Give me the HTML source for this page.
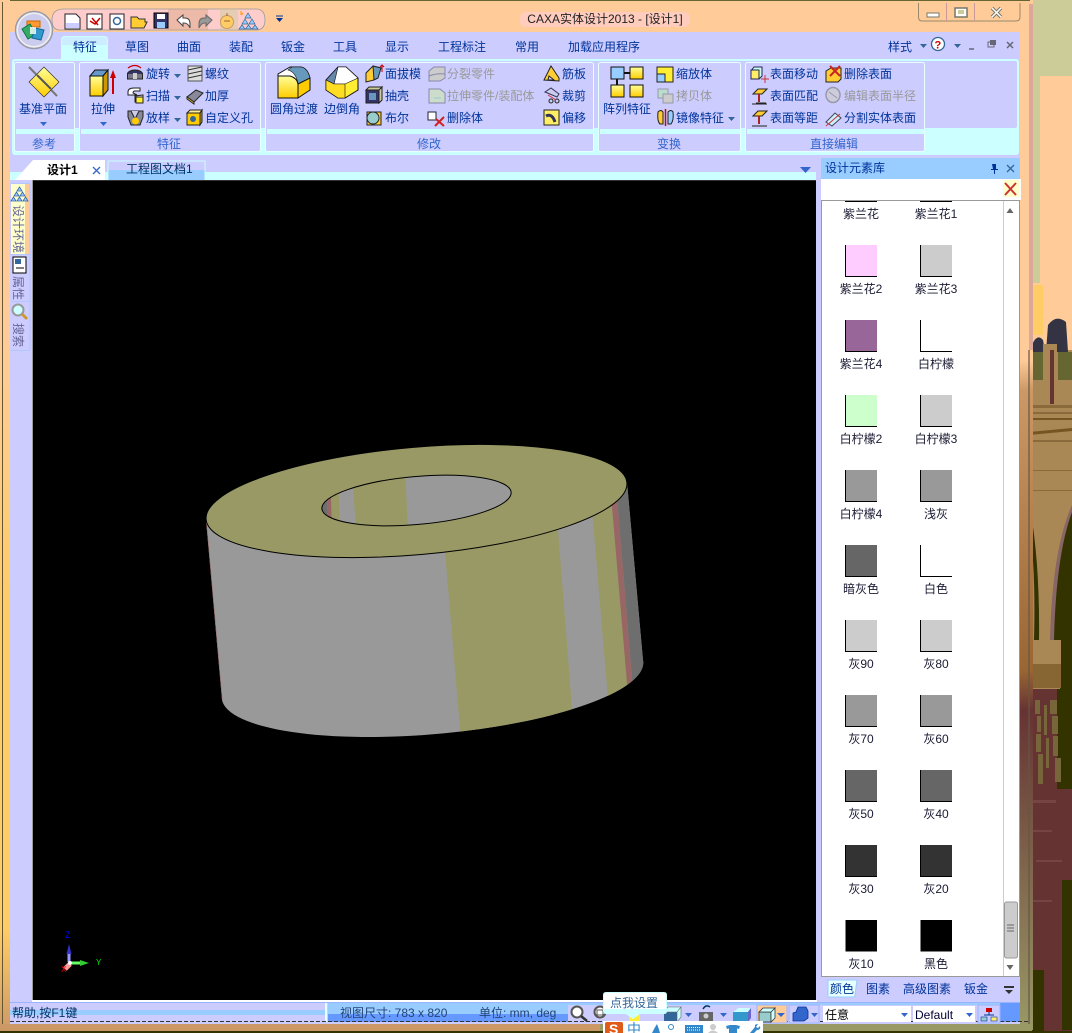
<!DOCTYPE html>
<html lang="zh"><head><meta charset="utf-8"><title>CAXA实体设计2013</title>
<style>
html,body{margin:0;padding:0;background:#000;width:1072px;height:1033px;overflow:hidden}
svg{display:block;position:absolute;left:0;top:0}
text{font-family:"Liberation Sans","Noto Sans CJK SC",sans-serif;font-size:12px;fill:#003399}
.c{text-anchor:middle}
.g{fill:#3366CC}
.d{fill:#999999}
.k{fill:#000}
.l{fill:#1a1a33;text-anchor:middle}
.s{fill:#224477}
</style></head><body>
<svg width="1072" height="1033" viewBox="0 0 1072 1033">
<defs>
<linearGradient id="y" x1="0" y1="0" x2="0" y2="1"><stop offset="0" stop-color="#FFFF99"/><stop offset="1" stop-color="#FFCC00"/></linearGradient>
<linearGradient id="lb" x1="0" y1="0" x2="0" y2="1"><stop offset="0" stop-color="#FFCC99"/><stop offset=".33" stop-color="#FFCC99"/><stop offset=".6" stop-color="#FFCC66"/><stop offset=".9" stop-color="#FFCC66"/><stop offset="1" stop-color="#CC9966"/></linearGradient>
<linearGradient id="rb" x1="0" y1="0" x2="0" y2="1"><stop offset="0" stop-color="#FFCC99"/><stop offset=".33" stop-color="#FFCC99"/><stop offset=".36" stop-color="#CC9966"/><stop offset=".64" stop-color="#996633"/><stop offset=".68" stop-color="#663333"/><stop offset="1" stop-color="#999966"/></linearGradient>
<clipPath id="side"><path d="M206 520L222 700A211 54 -5 0 0 643 660L627 482Z"/><ellipse cx="432.5" cy="679" rx="211.2" ry="53.7" transform="rotate(-5 432.5 679)"/></clipPath>
<clipPath id="hole"><ellipse cx="416.5" cy="500.5" rx="95" ry="24" transform="rotate(-5 416.5 500.5)"/></clipPath>
</defs>

<!-- desktop -->
<rect width="1072" height="1033" fill="#FFCC99"/>
<path d="M1033 0H1072V76H1040V283H1033Z" fill="#CCCC99"/>
<rect x="1033" y="285" width="10" height="50" fill="#FFCC66"/>
<rect x="1028" y="350" width="44" height="340" fill="#AA8855"/>
<path d="M1029 405h43v3h-43zM1029 412h43v2h-43zM1029 440h43v2h-43zM1029 470h43v1h-43zM1029 490h43v1h-43z" fill="#8A6A3A"/>
<path d="M1048 325Q1056 314 1066 322L1068 352H1046ZM1032 345Q1037 333 1043 340L1046 356H1030Z" fill="#333344"/>
<rect x="1029" y="352" width="15" height="28" fill="#666633"/>
<rect x="1058" y="352" width="14" height="28" fill="#666633"/>
<rect x="1043" y="344" width="14" height="60" fill="#AA8855"/>
<rect x="1050" y="350" width="4" height="54" fill="#663333"/>
<path d="M1029 418H1072V420H1029ZM1029 432L1072 428V431L1029 435Z" fill="#775522"/>
<path d="M1029 502Q1040 560 1039 640H1034Q1036 570 1029 520Z" fill="#333300"/>
<path d="M1072 510Q1054 550 1052 640H1060V690H1072Z" fill="#333300"/>
<path d="M1072 512Q1056 555 1054 640H1050Q1052 550 1072 505Z" fill="#886666"/>
<rect x="1029" y="640" width="32" height="24" fill="#AA8855"/>
<rect x="1029" y="664" width="32" height="24" fill="#886633"/>
<rect x="1029" y="689" width="43" height="344" fill="#663333"/>
<rect x="1057" y="689" width="15" height="100" fill="#333300"/>
<path d="M1035 700h5v14h-5zM1037 716h4v16h-4zM1036 734h5v18h-5zM1038 754h5v30h-5zM1044 705h3v30h-3zM1046 738h3v30h-3zM1050 700h7v14h-7zM1052 716h6v18h-6zM1053 736h5v20h-5zM1055 758h6v24h-6z" fill="#77663A"/>
<path d="M1062 880h10v150h-10zM1030 970h14v63h-14z" fill="#333300"/>
<path d="M1030 800h26v3h-26zM1032 830h20v2h-20zM1036 860h26v2h-26zM1030 900h22v2h-22z" fill="#774444"/>

<!-- window frame -->
<rect x="0" y="0" width="1028" height="33" fill="#FFCC99"/>
<rect x="0" y="0" width="1030" height="1" fill="#666633"/>
<rect x="0" y="0" width="10" height="1033" fill="url(#lb)"/>
<rect x="2" y="2" width="1" height="1024" fill="#665533"/>
<rect x="1020" y="30" width="13" height="1000" fill="url(#rb)"/>
<rect x="1029" y="4" width="4" height="346" fill="#CC9999" opacity=".7"/>
<rect x="1028" y="350" width="2" height="680" fill="#665544" opacity=".6"/>
<rect x="0" y="1024" width="1032" height="7" fill="#CC9966"/>
<rect x="600" y="1024" width="432" height="7" fill="#999966"/>
<rect x="0" y="1031" width="1072" height="2" fill="#333300"/>

<!-- main client -->
<rect x="10" y="32" width="1010" height="992" fill="#CCCCFF"/>
<!-- active tab -->
<path d="M61 60V40Q61 36 65 36H104Q108 36 108 40V60Z" fill="#CCFFFF"/>
<path d="M62 60V41Q62 37 66 37H103Q107 37 107 41V45H62Z" fill="#CCCCFF" opacity=".35"/>
<!-- ribbon -->
<rect x="12" y="59" width="1007" height="96" rx="3" fill="#CCFFFF"/>
<rect x="14" y="61" width="1003" height="67" rx="2" fill="#CCCCFF"/>
<g fill="#CCCCFF" stroke="#E6FFFF">
<rect x="14.500" y="62.500" width="60" height="89" rx="2"/>
<rect x="79.500" y="62.500" width="181" height="89" rx="2"/>
<rect x="265.500" y="62.500" width="328" height="89" rx="2"/>
<rect x="598.500" y="62.500" width="142" height="89" rx="2"/>
<rect x="745.500" y="62.500" width="179" height="89" rx="2"/>
</g>
<g fill="#CCFFFF"><rect x="16" y="129" width="58" height="5"/><rect x="81" y="129" width="179" height="5"/><rect x="267" y="129" width="326" height="5"/><rect x="600" y="129" width="140" height="5"/><rect x="747" y="129" width="177" height="5"/></g>

<!-- tab strip -->
<rect x="10" y="172" width="806" height="8" fill="#CCFFFF"/>
<path d="M15 180L33 160H105V180Z" fill="#fff"/>
<path d="M108 180V162Q108 160 110 160H203Q205 160 205 162V180Z" fill="#CCCCFF"/>
<path d="M108 170H205V180H108Z" fill="#99CCFF"/>
<path d="M108 180V161H205V180" fill="none" stroke="#CCFFFF"/>
<rect x="32" y="180" width="1" height="820" fill="#999"/>
<rect x="33" y="180" width="783" height="1" fill="#333"/>
<path d="M800 167H811L805.500 173Z" fill="#3366CC"/>

<!-- viewport -->
<rect x="33" y="181" width="783" height="819" fill="#000"/>
<rect x="32" y="1000" width="785" height="2" fill="#fff"/>

<!-- 3D part -->
<g clip-path="url(#side)">
<rect x="190" y="470" width="470" height="280" fill="#999999"/>
<path d="M444 540L461 740H574.500L558 530Z" fill="#999966"/>
<path d="M592 510L609 710L628 690L611 495Z" fill="#999966"/>
<path d="M611 495L628 695L633 690L616.500 490Z" fill="#996666"/>
<path d="M616.500 490L633 690L650 660L630 470Z" fill="#6E6E6E"/>
<path d="M206 520L222 700" stroke="#996666" stroke-width="1"/>
</g>
<ellipse cx="416.500" cy="501" rx="211.200" ry="53.700" transform="rotate(-5 416.500 501)" fill="#999966" stroke="#000" stroke-width="1"/>
<g clip-path="url(#hole)">
<rect x="315" y="470" width="200" height="60" fill="#999999"/>
<path d="M352 470H405L408 530H356Z" fill="#999966"/>
<path d="M330 470H338L340 530H332Z" fill="#999966"/>
<path d="M326 470H330L332 530H328Z" fill="#996666"/>
<path d="M315 470H326L328 530H315Z" fill="#6E6E6E"/>
</g>
<ellipse cx="416.500" cy="500.500" rx="95" ry="24" transform="rotate(-5 416.500 500.500)" fill="none" stroke="#000" stroke-width="1"/>

<!-- triad -->
<path d="M69 962V950" stroke="#9999FF" stroke-width="3"/>
<path d="M69 944L66.500 954H71.500Z" fill="#3333CC"/>
<path d="M71 963H82" stroke="#66FF66" stroke-width="3"/>
<path d="M80 960L89 963L80 966Z" fill="#33CC33"/>
<path d="M70 964L65 969" stroke="#FF9999" stroke-width="5"/>
<circle cx="70" cy="963" r="2" fill="#fff"/>
<text x="65" y="938" style="font-size:9px;fill:#0000FF">Z</text>
<text x="96" y="965" style="font-size:8px;fill:#00EE00">Y</text>
<text x="61" y="972" style="font-size:8px;fill:#FF0000">X</text>

<!-- left dock -->
<rect x="11" y="184" width="19" height="70" fill="#FFCC99"/>
<rect x="11" y="184" width="14" height="70" fill="#FFFFCC"/>
<path d="M11 183.500H30M30 184V350M11 254.500H30M11 301.500H30M11 350.500H30" stroke="#B3C6FF" fill="none"/>
<path d="M19.500 187l2.500 4h-5zM16.500 192l2.500 4h-5zM22.500 192l2.500 4h-5zM13.500 197l2.500 4h-5zM19.500 197l2.500 4h-5zM25.500 197l2.500 4h-5z" fill="#99CCFF" stroke="#3366AA" stroke-width=".8"/>
<rect x="13" y="257" width="13" height="16" fill="#fff" stroke="#000"/>
<rect x="15" y="259" width="6" height="5" fill="#336699"/><path d="M16 268h8" stroke="#000"/>
<circle cx="18" cy="310" r="5.500" fill="#CCFFFF" stroke="#999"  stroke-width="2"/><path d="M22 314l5 5" stroke="#CC9933" stroke-width="3"/>

<!-- right panel -->
<rect x="821" y="158" width="199" height="21" fill="#99CCFF"/>
<rect x="821" y="179" width="200" height="21" fill="#fff"/>
<rect x="1003" y="180" width="16" height="17" fill="#FFFFCC"/>
<path d="M1005 183L1016 195M1016 183L1005 195" stroke="#CC3333" stroke-width="2"/>
<rect x="821.500" y="200.500" width="198" height="776" fill="#fff" stroke="#999"/>
<path d="M992 164h4v5h2v1h-3v4h-1v-4h-3v-1h2z" fill="#003399" />
<path d="M1007 165l7 7M1014 165l-7 7" stroke="#336699" stroke-width="1.300"/>

<!-- scrollbar -->
<rect x="1003" y="201" width="1" height="775" fill="#ccc"/>
<path d="M1006.500 213L1010 208L1013.500 213Z" fill="#666"/>
<path d="M1006.500 965L1010 970L1013.500 965Z" fill="#666"/>
<rect x="1004.500" y="902" width="13" height="56" rx="2" fill="#CCCCCC" stroke="#999"/>
<path d="M1007 925h7M1007 928h7M1007 931h7" stroke="#666"/>

<!-- swatches -->
<path d="M845 201.500H877M920 201.500H952" stroke="#000"/>
<g stroke="#000" stroke-width="1">
<path d="M845.500 245V276.500H877V245Z" fill="#FFCCFF" stroke="none"/><path d="M845.500 245V276.500H877"  fill="none"/>
<path d="M920.500 245V276.500H952V245Z" fill="#CCCCCC" stroke="none"/><path d="M920.500 245V276.500H952"  fill="none"/>
<path d="M845.500 320V351.500H877V320Z" fill="#996699" stroke="none"/><path d="M845.500 320V351.500H877"  fill="none"/>
<path d="M920.500 320V351.500H952"  fill="none"/>
<path d="M845.500 395V426.500H877V395Z" fill="#CCFFCC" stroke="none"/><path d="M845.500 395V426.500H877"  fill="none"/>
<path d="M920.500 395V426.500H952V395Z" fill="#CCCCCC" stroke="none"/><path d="M920.500 395V426.500H952"  fill="none"/>
<path d="M845.500 470V501.500H877V470Z" fill="#999999" stroke="none"/><path d="M845.500 470V501.500H877"  fill="none"/>
<path d="M920.500 470V501.500H952V470Z" fill="#999999" stroke="none"/><path d="M920.500 470V501.500H952"  fill="none"/>
<path d="M845.500 545V576.500H877V545Z" fill="#666666" stroke="none"/><path d="M845.500 545V576.500H877"  fill="none"/>
<path d="M920.500 545V576.500H952"  fill="none"/>
<path d="M845.500 620V651.500H877V620Z" fill="#CCCCCC" stroke="none"/><path d="M845.500 620V651.500H877"  fill="none"/>
<path d="M920.500 620V651.500H952V620Z" fill="#CCCCCC" stroke="none"/><path d="M920.500 620V651.500H952"  fill="none"/>
<path d="M845.500 695V726.500H877V695Z" fill="#999999" stroke="none"/><path d="M845.500 695V726.500H877"  fill="none"/>
<path d="M920.500 695V726.500H952V695Z" fill="#999999" stroke="none"/><path d="M920.500 695V726.500H952"  fill="none"/>
<path d="M845.500 770V801.500H877V770Z" fill="#666666" stroke="none"/><path d="M845.500 770V801.500H877"  fill="none"/>
<path d="M920.500 770V801.500H952V770Z" fill="#666666" stroke="none"/><path d="M920.500 770V801.500H952"  fill="none"/>
<path d="M845.500 845V876.500H877V845Z" fill="#333333" stroke="none"/><path d="M845.500 845V876.500H877"  fill="none"/>
<path d="M920.500 845V876.500H952V845Z" fill="#333333" stroke="none"/><path d="M920.500 845V876.500H952"  fill="none"/>
<path d="M845.500 920V951.500H877V920Z" fill="#000" stroke="none"/>
<path d="M920.500 920V951.500H952V920Z" fill="#000" stroke="none"/>
</g>
<g>
<text class="l" x="861" y="218">紫兰花</text><text class="l" x="936" y="218">紫兰花1</text>
<text class="l" x="861" y="293">紫兰花2</text><text class="l" x="936" y="293">紫兰花3</text>
<text class="l" x="861" y="368">紫兰花4</text><text class="l" x="936" y="368">白柠檬</text>
<text class="l" x="861" y="443">白柠檬2</text><text class="l" x="936" y="443">白柠檬3</text>
<text class="l" x="861" y="518">白柠檬4</text><text class="l" x="936" y="518">浅灰</text>
<text class="l" x="861" y="593">暗灰色</text><text class="l" x="936" y="593">白色</text>
<text class="l" x="861" y="668">灰90</text><text class="l" x="936" y="668">灰80</text>
<text class="l" x="861" y="743">灰70</text><text class="l" x="936" y="743">灰60</text>
<text class="l" x="861" y="818">灰50</text><text class="l" x="936" y="818">灰40</text>
<text class="l" x="861" y="893">灰30</text><text class="l" x="936" y="893">灰20</text>
<text class="l" x="861" y="968">灰10</text><text class="l" x="936" y="968">黑色</text>
</g>
<!-- panel bottom tabs -->
<path d="M828 997V980H857L855 995Q855 997 853 997Z" fill="#E6FFFF" stroke="#99CCFF"/>
<path d="M1004 986h10v2h-10zM1005 990h8l-4 4z" fill="#333"/>

<!-- status bar -->
<rect x="10" y="1002" width="1010" height="1" fill="#99B3FF"/>
<rect x="10" y="1003" width="315" height="21" fill="#CCCCFF"/>
<rect x="10" y="1010" width="315" height="5" fill="#99CCFF"/>
<rect x="325" y="1003" width="2" height="21" fill="#E6FFFF"/>
<rect x="328" y="1003" width="692" height="12" fill="#99CCFF"/>
<rect x="328" y="1014" width="692" height="8" fill="#6699FF"/>
<rect x="568" y="1005" width="452" height="17" fill="#CCCCFF"/>
<rect x="1000" y="1003" width="20" height="19" fill="#6699FF"/>
<path d="M10 1021.500H1030" stroke="#333" stroke-dasharray="4 2"/>
<rect x="10" y="1022" width="1010" height="2" fill="#CCCCFF"/>
<!-- status icons -->
<circle cx="577" cy="1012" r="5.500" fill="#fff" stroke="#555" stroke-width="2"/><path d="M581 1016l6 5" stroke="#333" stroke-width="2.500"/>
<circle cx="600" cy="1012" r="5.500" fill="#fff" stroke="#555" stroke-width="2"/><rect x="597" y="1010" width="6" height="5" fill="none" stroke="#555"/>
<rect x="629" y="1015" width="11" height="7" fill="#FFEE33"/>
<path d="M664 1012h13v10h-13z" fill="#336699"/><path d="M664 1012l4-5h13l-4 5zM677 1012l4-5v10l-4 5z" fill="#CCFFFF" stroke="#666" stroke-width=".6"/>
<path d="M685 1013h7l-3.500 4z" fill="#3366CC"/>
<rect x="699" y="1012" width="14" height="10" fill="#666"/><circle cx="706" cy="1016" r="2.500" fill="#ccc"/><path d="M703 1009q3-5 7-2" stroke="#003366" fill="none" stroke-width="1.500"/>
<path d="M720 1013h7l-3.500 4z" fill="#3366CC"/>
<path d="M733 1012l5-4h13l-3 13-15 1z" fill="#3399CC"/><path d="M738 1008h13l-3 4h-15z" fill="#CCFFFF"/><path d="M748 1012l3-4v10l-3 4z" fill="#6666CC"/>
<rect x="757" y="1005" width="30" height="18" fill="#FFCC99" stroke="#99B3FF"/>
<rect x="759" y="1012" width="12" height="10" fill="#99CCCC" stroke="#333" stroke-width=".8"/><path d="M759 1012l4-4h12l-4 4zM771 1012l4-4v10l-4 4z" fill="#CCFFFF" stroke="#333" stroke-width=".8"/>
<path d="M777 1013h8l-4 4z" fill="#3366CC"/>
<rect x="789" y="1005" width="30" height="18" fill="#CCCCFF" stroke="#99B3FF"/>
<path d="M793 1021v-8l3-1 2-5h8l2 4v7l-4 3z" fill="#3366CC" stroke="#003399" stroke-width=".8"/>
<path d="M811 1013h7l-3.500 4z" fill="#3366CC"/>
<rect x="823" y="1006" width="88" height="16" fill="#fff"/><path d="M901 1013h7l-3.500 4z" fill="#3366CC"/>
<rect x="913" y="1006" width="62" height="16" fill="#fff"/><path d="M966 1013h7l-3.500 4z" fill="#3366CC"/>
<rect x="978" y="1005" width="22" height="18" fill="#CCCCFF" stroke="#99B3FF"/>
<rect x="986" y="1008" width="6" height="4" fill="#CC0000"/><path d="M989 1012v3M984 1015h10" stroke="#003399" fill="none"/>
<rect x="981" y="1017" width="6" height="4" fill="#99CCCC" stroke="#003399" stroke-width=".6"/><rect x="991" y="1017" width="6" height="4" fill="#FFEE66" stroke="#003399" stroke-width=".6"/>
<!-- tooltip + ime -->
<rect x="603" y="1021" width="160" height="12" fill="#fff"/>
<path d="M605 1024q0-2 2-2h14q2 0 2 2v9h-18z" fill="#E05A1A"/><text x="609" y="1034" style="font-size:14px;font-weight:bold;fill:#fff">S</text>
<text x="627" y="1034" style="font-size:14px;fill:#3388CC">中</text>
<path d="M652 1033q3-6 5-9q2 5 3 9z" fill="#3388CC"/><circle cx="671" cy="1027" r="2.500" fill="none" stroke="#3388CC"/>
<rect x="685" y="1025" width="18" height="8" fill="#3388CC"/><path d="M687 1027.500h14M687 1030h14" stroke="#fff" stroke-dasharray="1 1"/>
<circle cx="713" cy="1027" r="3" fill="#ccc"/><path d="M708 1033q5-5 10 0z" fill="#ccc"/>
<path d="M726 1026l4-1h6l4 1-1 3-2-.5v5h-8v-5l-2 .5z" fill="#3388CC"/>
<path d="M750 1033l5-6q-1-3 3-3l-2 3 2 1 2-2q1 4-3 4l-3 3z" fill="#3388CC"/>
<path d="M603 995Q603 992 606 992H664Q667 992 667 995V1011Q667 1014 664 1014H640L633 1019L626 1014H606Q603 1014 603 1011Z" fill="#CCFFFF"/>
<path d="M604 995Q604 993 606 993H664Q666 993 666 995V1009H604Z" fill="#fff"/>

<!-- title bar -->
<rect x="520" y="12" width="170" height="15" rx="6" fill="#FFCCCC" opacity=".7"/>
<path d="M60 30Q52 30 52 20Q52 9 64 9H256Q265 9 265 20Q265 30 256 30Z" fill="#FFCCCC" stroke="#999" stroke-width=".8"/>
<path d="M168 9h40v21h-40z" fill="#CC9966" opacity=".35"/>
<path d="M220 9h18v21h-18z" fill="#CCCC99" opacity=".5"/>
<path d="M65 14h11l4 4v11H65z" fill="#fff" stroke="#222"/><rect x="66" y="23" width="13" height="5" fill="#CCCCFF"/>
<path d="M87 14h15v15H87z" fill="#fff" stroke="#222"/><path d="M90 21l5 3 5-6M92 18l6 7" stroke="#CC0000" stroke-width="1.500" fill="none"/>
<path d="M110 14h14v15h-14z" fill="#fff" stroke="#222"/><circle cx="117" cy="21" r="3.500" fill="none" stroke="#336699" stroke-width="1.500"/>
<path d="M131 28v-11h6l2 2h6v3h2l-3 6z" fill="#FFCC33" stroke="#333"/>
<rect x="154" y="13" width="14" height="15" fill="#336" stroke="#000"/><rect x="157" y="14" width="8" height="5" fill="#fff"/><rect x="157" y="22" width="8" height="6" fill="#99CCFF"/>
<path d="M177 20l6-5v3h2q5 0 5 6v4q-2-5-6-5h-1v3z" fill="#fff" stroke="#444"/>
<path d="M212 20l-6-5v3h-2q-5 0-5 6v4q2-5 6-5h1v3z" fill="#999" stroke="#666"/>
<circle cx="227" cy="22" r="6.500" fill="#FFCC66" stroke="#CC9966"/><path d="M227 13v3M224 21h6" stroke="#996633"/>
<path d="M248 13l3 5h-6zM245 19l3 5h-6zM252 19l3 5h-6zM242 25l3 4h-6zM248.500 25l3 4h-6zM255 25l3 4h-6z" fill="#99CCFF" stroke="#336699" stroke-width=".7"/>
<path d="M243 13l-2 2M241 11v4" stroke="#FF9900"/>
<path d="M276 16h7" stroke="#003399"/><path d="M276 18h7l-3.500 4z" fill="#003399"/>
<!-- logo -->
<circle cx="34" cy="30" r="18.500" fill="#eee" stroke="#99A" stroke-width="1.500"/>
<circle cx="34" cy="30" r="16" fill="#CCE" />
<path d="M27 21h13v6H27z" fill="#FF9933" stroke="#CC6600"/>
<path d="M22 29l8-5 6 10-8 5z" fill="#33AA66" stroke="#117744"/>
<path d="M35 28l9 2-3 10-9-2z" fill="#3399CC" stroke="#116699"/>
<path d="M30 27h6v7h-6z" fill="#fff" opacity=".8"/>
<!-- window buttons -->
<path d="M918.500 3V17Q918.500 21 922 21H1016Q1020 21 1020 17V3" fill="#FFCC99" stroke="#99886b"/>
<path d="M946.500 3V21M974.500 3V21" stroke="#CC9999"/>
<rect x="927" y="13" width="12" height="4" fill="#fff" stroke="#776"/>
<rect x="955" y="8" width="12" height="9" fill="#fff" stroke="#776" stroke-width="1.500"/><rect x="958" y="10" width="6" height="4" fill="#CC9"/>
<path d="M992 8L1001 17M1001 8L992 17" stroke="#776" stroke-width="3.500"/><path d="M992 8L1001 17M1001 8L992 17" stroke="#fff" stroke-width="1.500"/>
<!-- ribbon top right -->
<path d="M920 44h7l-3.500 4z" fill="#336699"/>
<circle cx="938" cy="44" r="6.500" fill="#fff" stroke="#336699" stroke-width="1.300"/>
<text x="934.500" y="48.500" style="font-size:11px;font-weight:bold;fill:#CC0000">?</text>
<path d="M954 44h7l-3.500 4z" fill="#336699"/>
<path d="M969 49h5" stroke="#667" stroke-width="1.500"/>
<rect x="988" y="42" width="6" height="5" fill="none" stroke="#667"/><rect x="990" y="40" width="6" height="5" fill="#667"/>
<path d="M1007 42l6 6M1013 42l-6 6" stroke="#667" stroke-width="1.500"/>

<!-- ICONS : group 1 -->
<path d="M29 67L57 96" stroke="#777" stroke-width="2"/>
<path d="M44 67L59 82L44 97L29 82Z" fill="url(#y)" stroke="#333" stroke-width=".7"/>
<path d="M37 75L51 89" stroke="#555" stroke-width="2"/>
<path d="M40 122h7l-3.500 4z" fill="#3366CC"/>
<!-- extrude -->
<path d="M90 76L95 70H108L103 76Z" fill="#6699CC" stroke="#111"/>
<path d="M103 76L108 70V90L103 96Z" fill="#CC9900" stroke="#111"/>
<rect x="90" y="76" width="13" height="20" fill="url(#y)" stroke="#111"/>
<path d="M113 94V76" stroke="#CC0000" stroke-width="2"/><path d="M113 70L116 78H110Z" fill="#CC0000"/>
<path d="M100 122h7l-3.500 4z" fill="#3366CC"/>
<!-- small col -->
<ellipse cx="135" cy="74" rx="7.500" ry="4" fill="#336" stroke="#222"/><path d="M127.500 74v5h15v-5" fill="#778" stroke="#222"/><path d="M128 68q7-5 13 0" stroke="#CC0000" fill="none" stroke-width="1.300"/><rect x="133" y="73" width="4" height="6" fill="#ccc"/>
<path d="M128 92q0-4 6-4h6v3h-5q-2 0-2 2l4 2H128zM135 96l8-1v7h-8z" fill="#fff" stroke="#222"/><rect x="136" y="97" width="7" height="6" fill="#FFEE33" stroke="#222"/>
<path d="M128 111h15v6l-3 8h-9l-3-8z" fill="#889" stroke="#222"/><path d="M131 111l4 8 4-8" fill="#CCE" stroke="#222"/><circle cx="135.500" cy="121" r="3.500" fill="#FFCC00"/>
<path d="M174 74h7l-3.500 4zM174 96h7l-3.500 4zM174 118h7l-3.500 4z" fill="#336699"/>
<rect x="188" y="66" width="14" height="15" fill="#DDD" stroke="#555"/><path d="M188 70l14-3M188 74l14-3M188 78l14-3" stroke="#333"/>
<path d="M187 97l9-7 7 3-9 9z" fill="#889" stroke="#222"/><path d="M187 97l7 5v2l-7-5z" fill="#FFCC33" stroke="#222"/>
<path d="M187 113l3-3h12l-2 3z" fill="#FFEE99" stroke="#222"/><rect x="187" y="113" width="13" height="12" fill="#FFCC00" stroke="#222"/><path d="M200 113l2-3v12l-2 3z" fill="#CC9900" stroke="#222"/><circle cx="193" cy="119" r="3" fill="#336699"/>
<!-- group3 big -->
<path d="M278 84V74L290 67H300Q307 67 310 78L298 84Z" fill="#fff" stroke="#111"/>
<path d="M292 67h8q7 0 10 11l-12 6q-2-12-10-14z" fill="#6699BB" stroke="#111" stroke-width=".6"/>
<path d="M278 76H290Q297 78 298 84V98H278Z" fill="url(#y)" stroke="#111"/>
<path d="M298 84L310 78V90L298 98Z" fill="#FFCC00" stroke="#111"/>
<path d="M326 80L338 67L346 67L358 78L358 90L345 98L338 98L326 90Z" fill="#FFEE33" stroke="#111"/>
<path d="M326 80L338 67H346L334 84Z" fill="#6688AA" stroke="#111" stroke-width=".6"/>
<path d="M338 67H346L358 78L345 84H334Z" fill="#fff" stroke="#111" stroke-width=".6"/>
<path d="M334 84H345V98H338L326 90V80Z" fill="#FFDD22" stroke="#111" stroke-width=".6"/>
<!-- col1 -->
<path d="M366 73l7-7 8 2-7 12-8 2z" fill="#FFCC33" stroke="#222"/><path d="M373 66l8 2-3 10-4 2z" fill="#69B" stroke="#222"/><path d="M382 66v6M380 67l2-2 2 2" stroke="#CC0000" fill="none"/>
<rect x="366" y="90" width="13" height="13" fill="#336" stroke="#222"/><rect x="369" y="93" width="7" height="7" fill="#69B"/><path d="M379 90l3-3h-13l-3 3zM379 90l3-3v13l-3 3z" fill="#CC9" stroke="#222"/>
<path d="M367 112h14v13h-14z" fill="#FFCC33" stroke="#222"/><circle cx="373" cy="118" r="6" fill="#9CC" stroke="#222"/>
<!-- col2 -->
<path d="M429 71l5-4h11v11l-5 3H429z" fill="#CCC" stroke="#88A"/><path d="M429 76q8-3 16-2" stroke="#88A" fill="none"/>
<path d="M429 89h11l5 4v10h-16z" fill="#CCDDCC" stroke="#88A"/><path d="M434 98h7" stroke="#9CC"/>
<rect x="428" y="112" width="8" height="8" fill="#fff" stroke="#223"/><path d="M436 119l8 7M444 117l-9 9" stroke="#CC2222" stroke-width="2"/>
<!-- col3 -->
<path d="M544 80l7-14 8 12v3z" fill="#FFCC33" stroke="#222"/><path d="M549 76l5 4h-6z" fill="#CCCCFF" stroke="#222"/>
<path d="M545 92l6-4 8 6-2 3z" fill="#CCE" stroke="#335"/><circle cx="551" cy="101" r="2" fill="none" stroke="#222"/><circle cx="557" cy="101" r="2" fill="none" stroke="#222"/><path d="M548 95l8 5" stroke="#CC3333"/>
<rect x="544" y="110" width="15" height="15" fill="#FFEE66" stroke="#222"/><path d="M546 116q6-3 9 6" stroke="#335" stroke-width="3" fill="none"/>
<!-- group4 -->
<rect x="611" y="67" width="13" height="12" fill="#99CCFF" stroke="#111"/>
<rect x="630" y="67" width="13" height="12" fill="url(#y)" stroke="#111"/>
<rect x="611" y="85" width="13" height="12" fill="url(#y)" stroke="#111"/>
<rect x="630" y="85" width="13" height="12" fill="url(#y)" stroke="#111"/>
<path d="M624 73h6M617 79v6" stroke="#111" stroke-width="2"/>
<rect x="657" y="67" width="16" height="15" fill="#FFEE33" stroke="#222"/><rect x="657" y="74" width="8" height="8" fill="#99CCFF" stroke="#222"/>
<rect x="658" y="89" width="10" height="9" fill="#BBDDCC" stroke="#99A"/><rect x="663" y="94" width="10" height="9" fill="#CCC" stroke="#99A"/>
<path d="M658 112q3-3 5 0v12h-3q-3-3-2-12z" fill="#FFCC33" stroke="#222"/><path d="M668 112q3-3 5 0q1 8-2 12h-3z" fill="#99CCFF" stroke="#222"/><path d="M665.500 109v17" stroke="#CC0000" stroke-width="1.500"/>
<path d="M728 117h7l-3.500 4z" fill="#336699"/>
<!-- group5 -->
<path d="M751 71l3-4h8v9l-3 3h-8z" fill="#CFE" stroke="#225"/><rect x="751" y="70" width="8" height="9" fill="#FFEE66" stroke="#225"/>
<path d="M765 75v8M761 79h8" stroke="#CC3333"/>
<path d="M753 94l5-5h9l-5 5zM756 103h10M752 104h15" fill="#FFCC33" stroke="#222"/><path d="M759 94v8" stroke="#AA2222" stroke-width="2"/>
<path d="M753 116l5-5h9l-5 5zM752 126h15" fill="#FFCC33" stroke="#222"/><path d="M759 116v8" stroke="#AA2222" stroke-width="2"/>
<path d="M826 71l5-3h10v11l-3 3h-12z" fill="#FFCC33" stroke="#222"/>
<path d="M830 66l10 10M840 66l-10 10" stroke="#CC2222" stroke-width="2"/>
<ellipse cx="833" cy="95" rx="7" ry="7.500" fill="#CCD" stroke="#99A" stroke-width="1.500"/><path d="M829 92l8 6" stroke="#99A"/>
<path d="M826 122l9-9 6 5-9 8z" fill="#CCEEFF" stroke="#445"/><path d="M826 126l14-12" stroke="#CC3333"/>

<!-- TEXT -->
<text class="c" x="605" y="23" style="fill:#222">CAXA实体设计2013 - [设计1]</text>
<g class="tabs">
<text class="c" x="85" y="51">特征</text><text class="c" x="137" y="51">草图</text><text class="c" x="189" y="51">曲面</text><text class="c" x="241" y="51">装配</text><text class="c" x="293" y="51">钣金</text><text class="c" x="345" y="51">工具</text><text class="c" x="397" y="51">显示</text><text class="c" x="462" y="51">工程标注</text><text class="c" x="527" y="51">常用</text><text class="c" x="604" y="51">加载应用程序</text><text class="c" x="900" y="51">样式</text>
</g>
<text class="c" x="43" y="113">基准平面</text>
<text class="c" x="103" y="113">拉伸</text>
<text x="146" y="78">旋转</text><text x="146" y="100">扫描</text><text x="146" y="122">放样</text>
<text x="205" y="78">螺纹</text><text x="205" y="100">加厚</text><text x="205" y="122">自定义孔</text>
<text class="c" x="294" y="113">圆角过渡</text><text class="c" x="342" y="113">边倒角</text>
<text x="385" y="78">面拔模</text><text x="385" y="100">抽壳</text><text x="385" y="122">布尔</text>
<text class="d" x="447" y="78">分裂零件</text><text class="d" x="447" y="100">拉伸零件/装配体</text><text x="447" y="122">删除体</text>
<text x="562" y="78">筋板</text><text x="562" y="100">裁剪</text><text x="562" y="122">偏移</text>
<text class="c" x="627" y="113">阵列特征</text>
<text x="676" y="78">缩放体</text><text class="d" x="676" y="100">拷贝体</text><text x="676" y="122">镜像特征</text>
<text x="770" y="78">表面移动</text><text x="770" y="100">表面匹配</text><text x="770" y="122">表面等距</text>
<text x="844" y="78">删除表面</text><text class="d" x="844" y="100">编辑表面半径</text><text x="844" y="122">分割实体表面</text>
<text class="c g" x="44" y="148">参考</text><text class="c g" x="169" y="148">特征</text><text class="c g" x="429" y="148">修改</text><text class="c g" x="669" y="148">变换</text><text class="c g" x="834" y="148">直接编辑</text>
<text x="47" y="174" class="k" style="font-weight:bold">设计1</text>
<path d="M93 167l7 7M100 167l-7 7" stroke="#3366CC" stroke-width="1.300"/>
<text x="126" y="173" style="fill:#003366">工程图文档1</text>
<text x="825" y="172">设计元素库</text>
<text class="c" x="842" y="993">颜色</text><text class="c" x="878" y="993">图素</text><text class="c" x="927" y="993">高级图素</text><text class="c" x="976" y="993">钣金</text>
<text transform="translate(14 205) rotate(90)" style="fill:#666699">设计环境</text>
<text transform="translate(14 276) rotate(90)" style="fill:#666699">属性</text>
<text transform="translate(14 323) rotate(90)" style="fill:#666699">搜索</text>
<text x="12" y="1017" style="fill:#003366">帮助,按F1键</text>
<text x="340" y="1017" class="s">视图尺寸: 783 x 820</text>
<text x="479" y="1017" class="s">单位: mm, deg</text>
<text class="k" x="825" y="1019" style="font-size:12px">任意</text>
<text class="k" x="915" y="1019" style="font-size:12px;fill:#000033">Default</text>
<text class="c" x="634" y="1007" style="fill:#336699">点我设置</text>
</svg>
</body></html>
